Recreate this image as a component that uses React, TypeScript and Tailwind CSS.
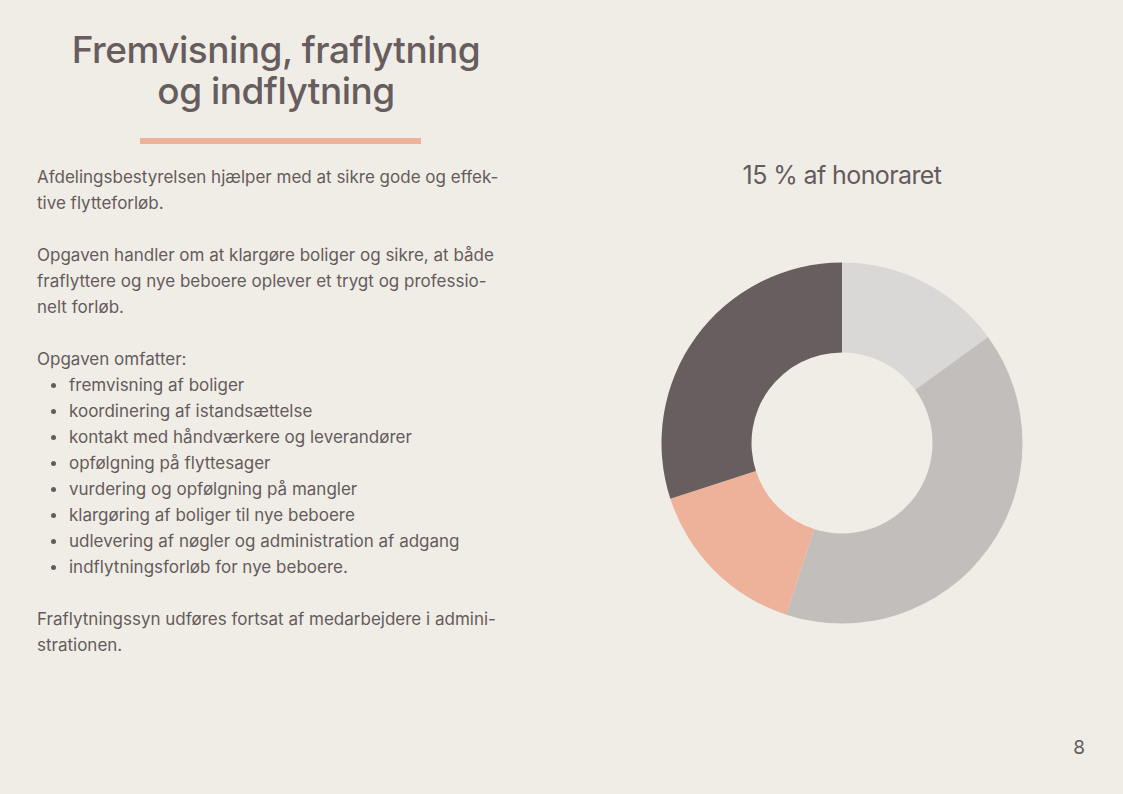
import React from 'react';

const FONT = "font-['Inter','Liberation_Sans',sans-serif]";

const SEGMENTS = [
  { from: 0, to: 54, color: '#d9d8d7' },
  { from: 54, to: 198, color: '#c2bebc' },
  { from: 198, to: 252, color: '#eeb29a' },
  { from: 252, to: 360, color: '#685d5f' },
];

function point(cx: number, cy: number, r: number, deg: number) {
  const a = (deg * Math.PI) / 180;
  return [cx + r * Math.sin(a), cy - r * Math.cos(a)];
}

function arcPath(cx: number, cy: number, R: number, r: number, from: number, to: number) {
  const large = to - from > 180 ? 1 : 0;
  const [x1, y1] = point(cx, cy, R, from);
  const [x2, y2] = point(cx, cy, R, to);
  const [x3, y3] = point(cx, cy, r, to);
  const [x4, y4] = point(cx, cy, r, from);
  return `M${x1} ${y1} A${R} ${R} 0 ${large} 1 ${x2} ${y2} L${x3} ${y3} A${r} ${r} 0 ${large} 0 ${x4} ${y4} Z`;
}

function Donut() {
  return (
    <svg width="362" height="362" viewBox="0 0 362 362">
      {SEGMENTS.map((s) => (
        <path key={s.from} d={arcPath(181, 181, 180.5, 90.5, s.from, s.to)} fill={s.color} />
      ))}
    </svg>
  );
}

const ITEMS = [
  'fremvisning af boliger',
  'koordinering af istandsættelse',
  'kontakt med håndværkere og leverandører',
  'opfølgning på flyttesager',
  'vurdering og opfølgning på mangler',
  'klargøring af boliger til nye beboere',
  'udlevering af nøgler og administration af adgang',
  'indflytningsforløb for nye beboere.',
];

export default function App() {
  return (
    <div className={`flex h-[794px] w-[1123px] flex-col bg-[#f0ede7] text-[#655b5c] ${FONT}`}>
      <div className="flex flex-1">
        {/* venstre kolonne */}
        <div className="ml-[37px] w-[478px] pt-[29px]">
          <h1 className="text-center text-[37px] font-medium leading-[41px] tracking-[-0.5px] text-[#675c5e]">
            Fremvisning, fraflytning
            <br />
            og indflytning
          </h1>
          <div className="ml-[103px] mt-[27px] h-[6px] w-[281px] bg-[#eeb29a]" />

          <div className="mt-[20px] text-[17px] leading-[26px]">
            <p className="mb-[26px]">
              Afdelingsbestyrelsen hjælper med at sikre gode og effek-
              <br />
              tive flytteforløb.
            </p>
            <p className="mb-[26px]">
              Opgaven handler om at klargøre boliger og sikre, at både
              <br />
              fraflyttere og nye beboere oplever et trygt og professio-
              <br />
              nelt forløb.
            </p>
            <p>Opgaven omfatter:</p>
            <ul className="mb-[26px]">
              {ITEMS.map((item) => (
                <li key={item} className="flex items-center">
                  <span className="ml-[14px] mr-[13px] h-[5px] w-[5px] rounded-full bg-[#655b5c]" />
                  {item}
                </li>
              ))}
            </ul>
            <p>
              Fraflytningssyn udføres fortsat af medarbejdere i admini-
              <br />
              strationen.
            </p>
          </div>
        </div>

        {/* højre kolonne */}
        <div className="ml-[146px] flex w-[362px] flex-col items-center pt-[160px]">
          <p className="text-[25px] leading-[30px] tracking-[-0.6px]">15 % af honoraret</p>
          <div className="mt-[72px]">
            <Donut />
          </div>
        </div>
      </div>

      <div className="flex justify-end pb-[34px] pr-[38px] text-[19px] leading-[24px]">8</div>
    </div>
  );
}
